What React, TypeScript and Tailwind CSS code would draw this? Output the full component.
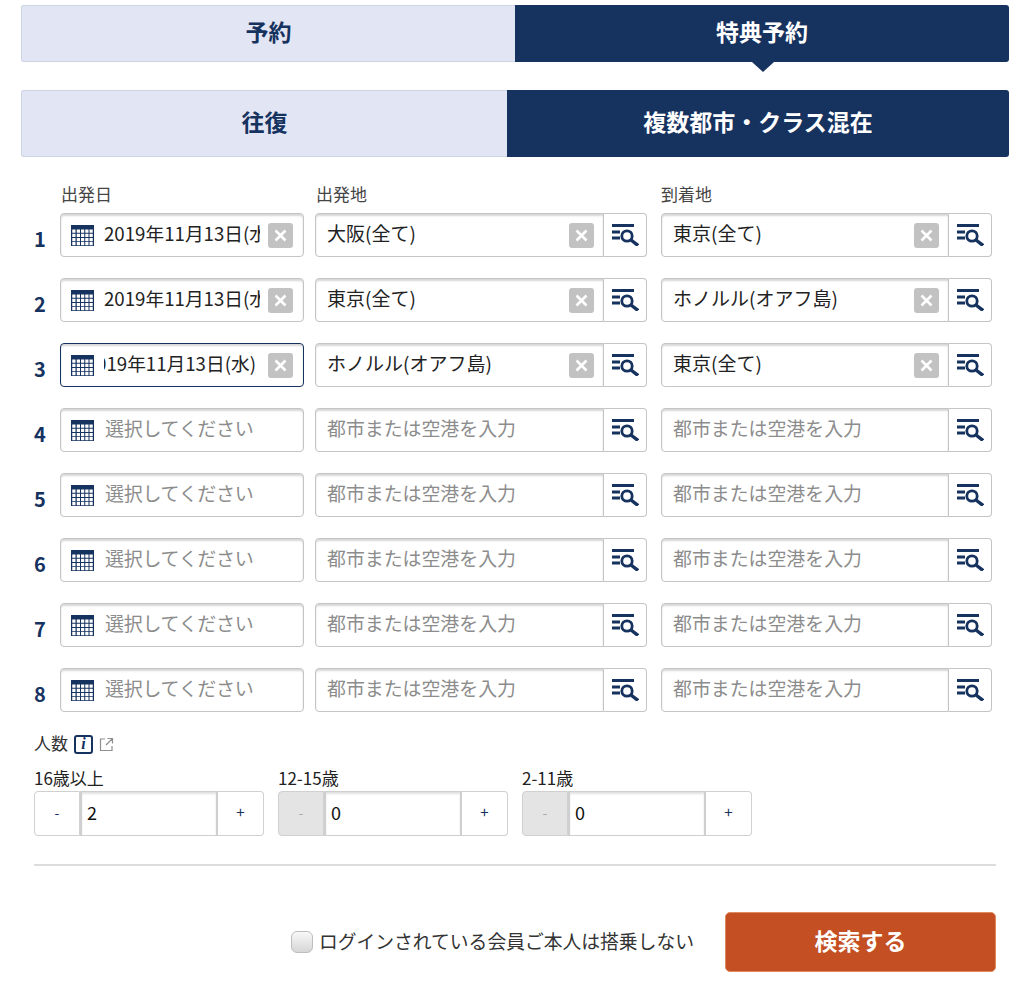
import React from "react";

const NAVY = "#16325f";

function CalendarIcon() {
  return (
    <svg width="23" height="21" viewBox="0 0 23 21" className="shrink-0">
      <rect x="0" y="0" width="23" height="21" fill="#16325f" />
      <g fill="#fff">
        {[4.5, 8.75, 13, 17].map((y) =>
          [1.25, 5.75, 10, 14.25, 18.5].map((x) => (
            <rect key={`${x}-${y}`} x={x} y={y} width="3.25" height="3.25" />
          ))
        )}
      </g>
    </svg>
  );
}

function ListSearchIcon() {
  return (
    <svg width="27" height="22" viewBox="0 0 27 22">
      <rect x="0" y="0" width="22" height="3" fill="#16325f" />
      <rect x="0" y="6.5" width="8" height="3" fill="#16325f" />
      <rect x="0" y="12.5" width="8" height="3" fill="#16325f" />
      <circle cx="15" cy="12" r="5.2" fill="none" stroke="#16325f" strokeWidth="2.8" />
      <path d="M19 16 L26 21.5" stroke="#16325f" strokeWidth="3.4" fill="none" />
    </svg>
  );
}

function ClearButton() {
  return (
    <span className="w-[25px] h-[25px] shrink-0 rounded-[3px] bg-[#c2c2c2] flex items-center justify-center">
      <svg width="13" height="13" viewBox="0 0 13 13">
        <path d="M1.5 1.5 L11.5 11.5 M11.5 1.5 L1.5 11.5" stroke="#fff" strokeWidth="2.6" />
      </svg>
    </span>
  );
}

const fieldBox = "h-[44px] bg-white border shadow-[inset_0_2px_2px_rgba(0,0,0,0.16)]";

function DateField({ value, focus }: { value?: string; focus?: boolean }) {
  return (
    <div
      className={`w-[244px] flex items-center rounded-[4px] pl-[10px] ${fieldBox} ${
        focus ? "border-[#16325f]" : "border-[#c4c4c4]"
      }`}
    >
      <CalendarIcon />
      {value ? (
        <>
          <div
            className={`ml-[10px] mb-[4px] w-[156px] h-[26px] overflow-hidden flex text-[18.7px] leading-[26px] text-[#222] whitespace-nowrap ${
              focus ? "justify-end pr-[4px]" : "justify-start"
            }`}
          >
            <span className="shrink-0">{value}</span>
          </div>
          <span className="ml-[8px]">
            <ClearButton />
          </span>
        </>
      ) : (
        <span className="ml-[11px] mb-[4px] text-[19px] leading-[26px] tracking-[-0.3px] text-[#8c8c8c] whitespace-nowrap">
          選択してください
        </span>
      )}
    </div>
  );
}

function PlaceField({ value, wide }: { value?: string; wide?: boolean }) {
  return (
    <div className={`flex h-[44px] ${wide ? "w-[332px]" : "w-[331px]"}`}>
      <div
        className={`flex items-center justify-between rounded-l-[4px] pl-[11px] pr-[9px] border-[#c4c4c4] ${fieldBox} ${
          wide ? "w-[289px]" : "w-[288px]"
        }`}
      >
        {value ? (
          <>
            <span className="mb-[4px] text-[19px] leading-[26px] text-[#222] whitespace-nowrap">{value}</span>
            <ClearButton />
          </>
        ) : (
          <span className="mb-[4px] text-[18.9px] leading-[26px] text-[#8c8c8c] whitespace-nowrap">
            都市または空港を入力
          </span>
        )}
      </div>
      <div className="w-[43px] border border-l-0 border-[#c4c4c4] rounded-r-[4px] flex items-center justify-center bg-white">
        <ListSearchIcon />
      </div>
    </div>
  );
}

function Stepper({ label, value, disabled }: { label: string; value: string; disabled?: boolean }) {
  return (
    <div className="w-[230px]">
      <div className="h-[22px] -mt-[2px] mb-[2px] text-[17px] leading-[22px] text-[#222] whitespace-nowrap">{label}</div>
      <div className="flex h-[45px]">
        <div
          className={`w-[46px] flex items-center justify-center rounded-l-[4px] border border-[#d0d0d0] pb-[2px] text-[14px] ${
            disabled ? "bg-[#e4e4e4] text-[#aaa]" : "bg-white text-[#16325f]"
          }`}
        >
          -
        </div>
        <div className="w-[138px] flex items-center pl-[5px] pb-[2px] border-y border-x-2 border-[#cfcfcf] shadow-[inset_0_2px_2px_rgba(0,0,0,0.12)] text-[18px] text-[#111]">
          {value}
        </div>
        <div className="w-[46px] flex items-center justify-center rounded-r-[4px] border border-l-0 border-[#d0d0d0] pb-[2px] text-[15px] text-[#16325f]">
          +
        </div>
      </div>
    </div>
  );
}

const rows: { date?: string; from?: string; to?: string; focus?: boolean }[] = [
  { date: "2019年11月13日(水)", from: "大阪(全て)", to: "東京(全て)" },
  { date: "2019年11月13日(水)", from: "東京(全て)", to: "ホノルル(オアフ島)" },
  { date: "2019年11月13日(水)", from: "ホノルル(オアフ島)", to: "東京(全て)", focus: true },
  {},
  {},
  {},
  {},
  {},
];

export default function App() {
  return (
    <div
      className="w-[1024px] h-[988px] overflow-hidden bg-white pt-[5px]"
      style={{ fontFamily: '"Noto Sans CJK JP", "Noto Sans", sans-serif' }}
    >
      {/* top tabs */}
      <div className="relative ml-[21px] w-[988px] h-[57px] flex">
        <div className="w-[494px] flex items-center justify-center rounded-l-[3px] bg-[#e2e6f4] border border-[#cfd4e4] border-r-0 pb-[4px] text-[23px] font-bold text-[#16325f]">
          予約
        </div>
        <div className="w-[494px] flex items-center justify-center rounded-r-[3px] bg-[#16325f] pb-[4px] text-[23px] font-bold text-white">
          特典予約
        </div>
        <div className="absolute left-[731px] top-[57px] w-0 h-0 border-x-[11px] border-x-transparent border-t-[10px] border-t-[#16325f]" />
      </div>

      {/* second tabs */}
      <div className="ml-[21px] mt-[28px] w-[988px] h-[67px] flex">
        <div className="w-[486px] flex items-center justify-center rounded-l-[3px] bg-[#e2e6f4] border border-[#cfd4e4] border-r-0 pb-[4px] text-[23px] font-bold text-[#16325f]">
          往復
        </div>
        <div className="w-[502px] flex items-center justify-center rounded-r-[3px] bg-[#16325f] pb-[4px] text-[23px] font-bold text-white whitespace-nowrap">
          複数都市・クラス混在
        </div>
      </div>

      {/* column labels */}
      <div className="mt-[25px] pl-[60px] flex h-[24px] text-[17px] leading-[24px] text-[#444]">
        <div className="w-[256px] pl-[1px]">出発日</div>
        <div className="w-[345px]">出発地</div>
        <div>到着地</div>
      </div>

      {/* rows */}
      <div className="mt-[7px] flex flex-col gap-[21px]">
        {rows.map((r, i) => (
          <div key={i} className="flex pl-[34px]">
            <div
              className="w-[26px] pr-[14px] pt-[10px] text-center text-[20px] leading-[32px] font-bold"
              style={{ color: NAVY }}
            >
              {i + 1}
            </div>
            <DateField value={r.date} focus={r.focus} />
            <div className="ml-[11px]">
              <PlaceField value={r.from} wide />
            </div>
            <div className="ml-[14px]">
              <PlaceField value={r.to} />
            </div>
          </div>
        ))}
      </div>

      {/* passengers */}
      <div className="mt-[20px] ml-[34px] h-[24px] flex items-center text-[17px] text-[#333]">
        <span className="mb-[2px]">人数</span>
        <span
          className="ml-[6px] w-[19px] h-[19px] rounded-[3px] border-2 border-[#16325f] flex items-center justify-center text-[16px] font-bold italic leading-none text-[#16325f]"
          style={{ fontFamily: '"Liberation Serif", serif' }}
        >
          i
        </span>
        <svg width="15" height="15" viewBox="0 0 15 15" className="ml-[6px]">
          <path d="M6 2 H1.5 V13.5 H13 V9 M8.5 1.5 H13.5 V6.5 M13.5 1.5 L7 8" fill="none" stroke="#8f8f8f" strokeWidth="1.2" />
        </svg>
      </div>
      <div className="mt-[13px] ml-[34px] flex gap-[14px]">
        <Stepper label="16歳以上" value="2" />
        <Stepper label="12-15歳" value="0" disabled />
        <Stepper label="2-11歳" value="0" disabled />
      </div>

      <div className="mt-[28px] ml-[34px] w-[962px] h-[2px] bg-[#dcdcdc]" />

      {/* footer */}
      <div className="mt-[46px] ml-[34px] w-[962px] flex items-center justify-end">
        <span className="w-[22px] h-[22px] rounded-[6px] border border-[#bdbdbd] bg-gradient-to-b from-[#f8f8f8] to-[#d6d6d6]" />
        <span className="ml-[6px] mb-[2px] text-[18.8px] leading-[26px] text-[#333] whitespace-nowrap">
          ログインされている会員ご本人は搭乗しない
        </span>
        <button className="ml-[31px] w-[271px] h-[60px] rounded-[5px] bg-[#c44f22] border border-[#dd8a60] pb-[4px] text-[23px] font-bold text-white">
          検索する
        </button>
      </div>
    </div>
  );
}
